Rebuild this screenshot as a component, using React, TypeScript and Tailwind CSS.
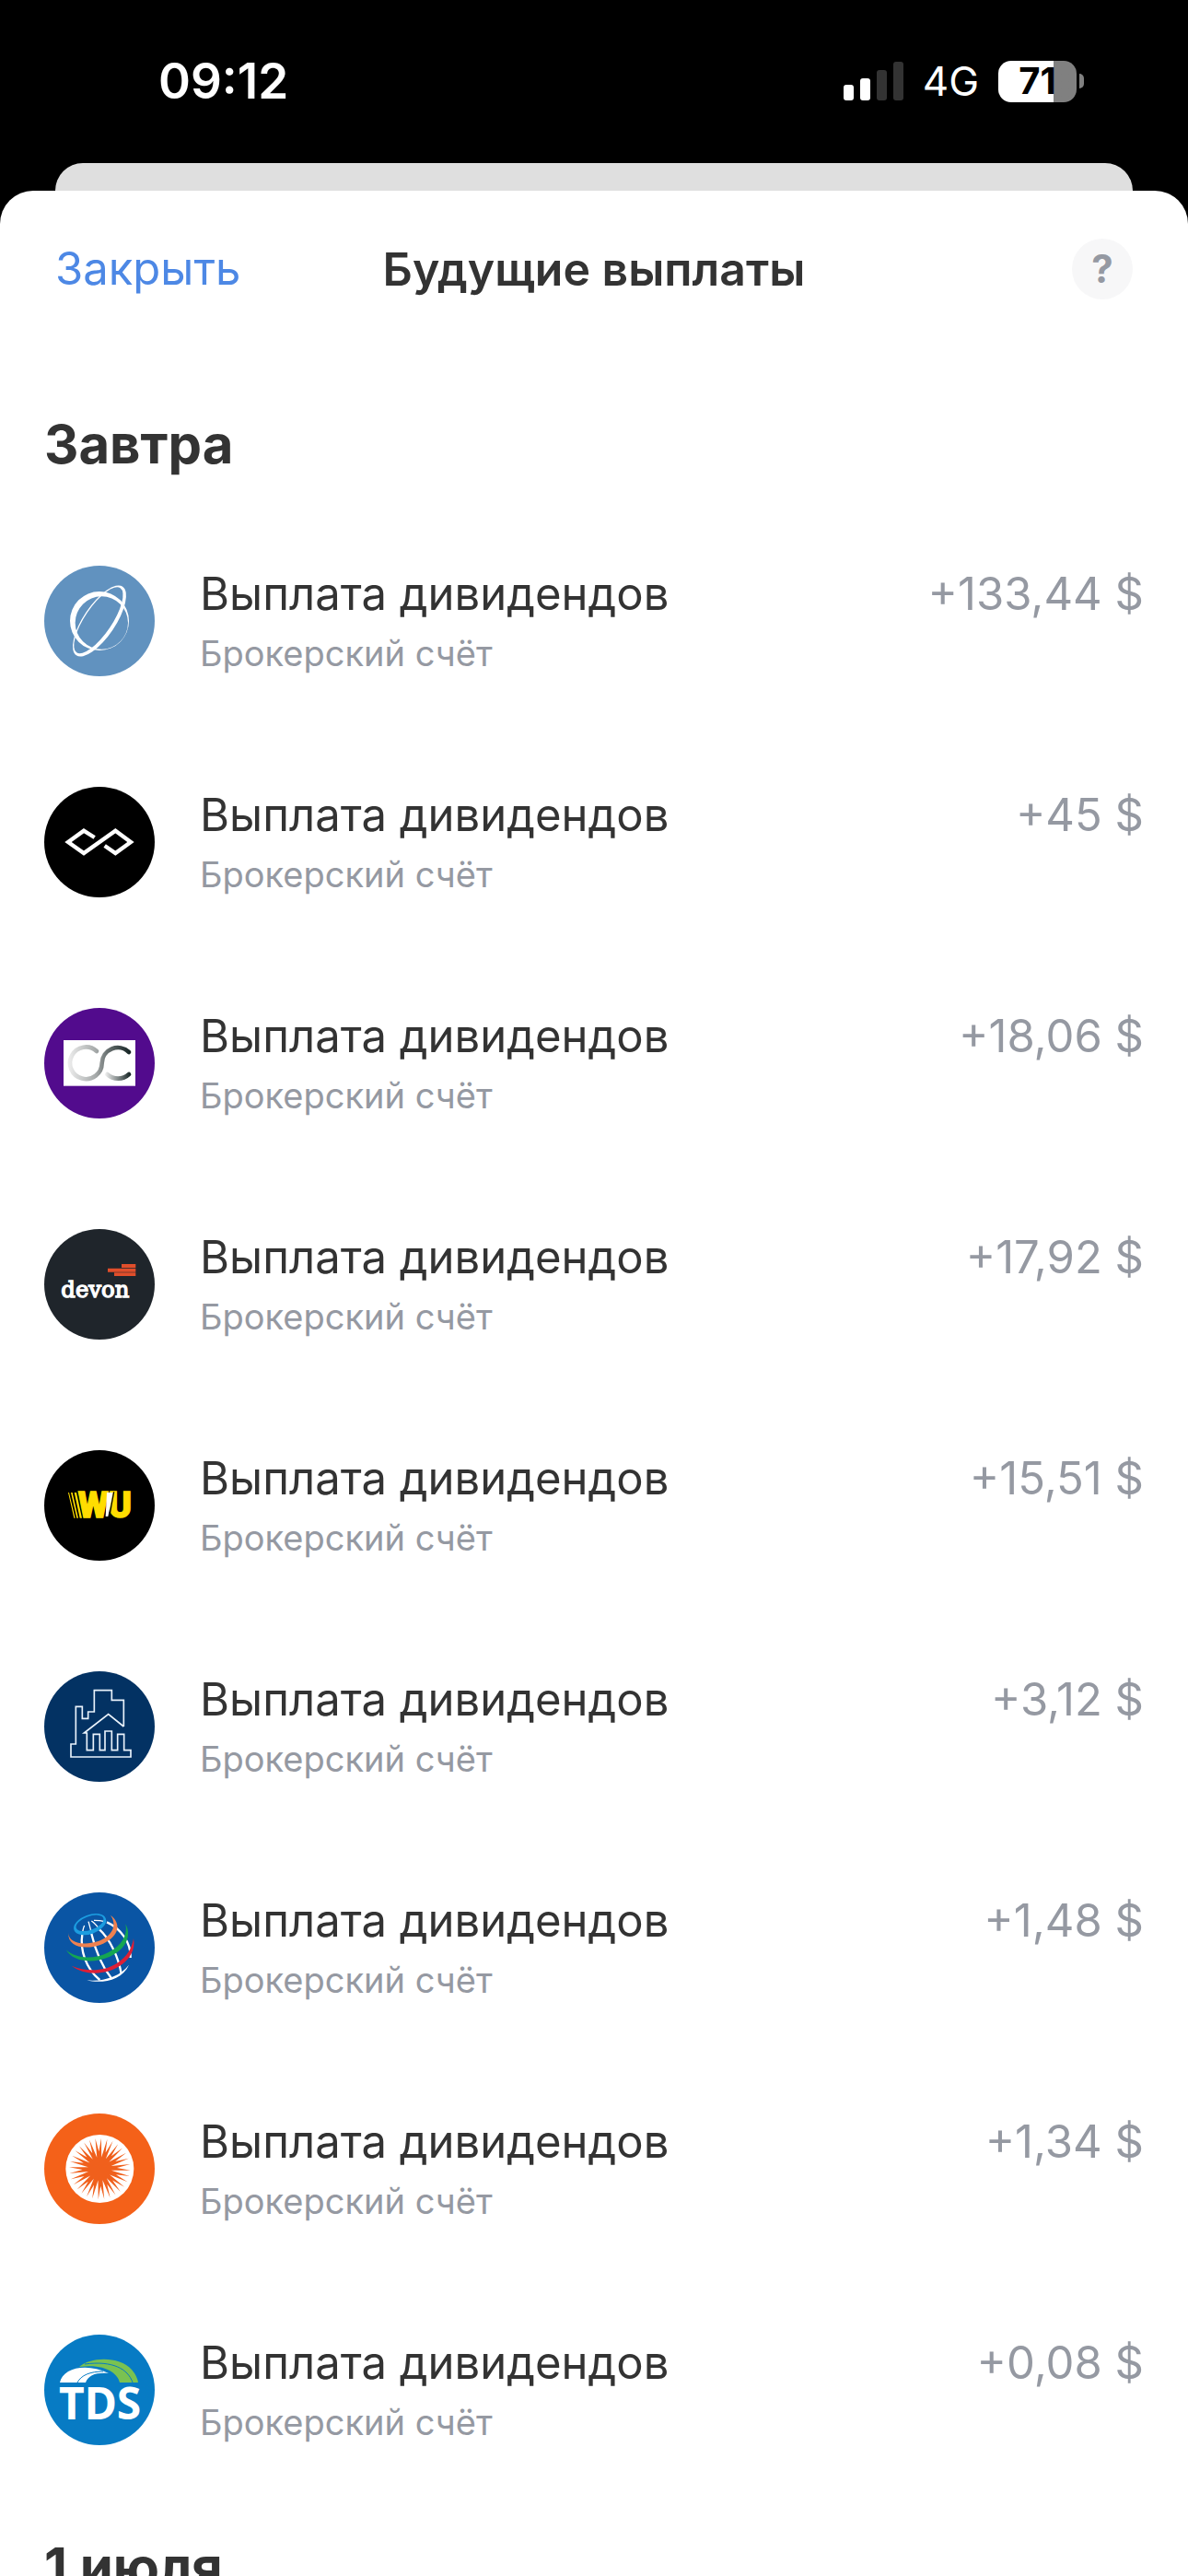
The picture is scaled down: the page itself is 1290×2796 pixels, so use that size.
import React, { ReactNode } from 'react';

interface LogoProps {
  className: string;
  viewBox?: string;
  children: ReactNode;
}

/**
 * Round company logo
 */
function Logo({ className, viewBox = '24 27 360 360', children }: LogoProps) {
  return (
    <svg viewBox={viewBox} aria-hidden="true" className={`size-[120px] shrink-0 rounded-full ${className}`}>
      {children}
    </svg>
  );
}

function OrbitLogo() {
  return (
    <Logo className="bg-[#6192bf]">
      <path
        fill="#fff"
        fillRule="evenodd"
        d="M108 207a96 96 0 1 0 192 0a96 96 0 1 0 -192 0zM125 213a86 86 0 1 0 172 0a86 86 0 1 0 -172 0z"
      />
      <path
        fill="#fff"
        fillRule="evenodd"
        transform="rotate(-56 204 207)"
        d="M69 207a135 52 0 1 0 270 0a135 52 0 1 0 -270 0zM77 203a127 44 0 1 0 254 0a127 44 0 1 0 -254 0z"
      />
    </Logo>
  );
}

function InfinityLogo() {
  return (
    <Logo className="bg-black">
      <path
        d="M188 192L153 170L102 207L153 243L256 170L306 207L256 243L221 219"
        fill="none"
        stroke="#fff"
        strokeWidth="13"
      />
    </Logo>
  );
}

function CurvesLogo() {
  return (
    <Logo className="bg-[#520b8d]">
      <defs>
        <linearGradient id="curve-main" gradientUnits="userSpaceOnUse" x1="104" y1="0" x2="306" y2="0">
          <stop offset="0" stopColor="#ececec" />
          <stop offset="0.45" stopColor="#a3a7a7" />
          <stop offset="0.6" stopColor="#6f7777" />
          <stop offset="1" stopColor="#132222" />
        </linearGradient>
        <linearGradient id="curve-tail" gradientUnits="userSpaceOnUse" x1="222" y1="0" x2="306" y2="0">
          <stop offset="0" stopColor="#f2f2f2" />
          <stop offset="1" stopColor="#132222" />
        </linearGradient>
      </defs>
      <rect x="87" y="132" width="234" height="149" fill="#fff" />
      <g fill="none" strokeWidth="14" strokeLinecap="round">
        <path stroke="url(#curve-main)" d="M195 168A52 52 0 1 0 212 207A52 52 0 0 1 300 171" />
        <path stroke="url(#curve-tail)" d="M229 243A52 52 0 0 0 300 243" />
      </g>
    </Logo>
  );
}

function DevonLogo() {
  return (
    <Logo className="bg-[#1f252b]">
      <path fill="#e04e2b" d="M276 141h46v12h-46zM231 155h91v12h-91zM252 169h70v11h-70z" />
      <text x="79" y="248" fill="#fff" stroke="#fff" strokeWidth="4" fontSize="73" fontFamily="DejaVu Serif, serif">
        devon
      </text>
    </Logo>
  );
}

function WuLogo() {
  return (
    <Logo className="bg-black">
      <path fill="#ffdd00" d="M102 165h3l20 83h-4zM111 165h5l19 83h-5zM122 165h7l18 83h-7z" />
      <g
        fill="#ffdd00"
        stroke="#ffdd00"
        strokeWidth="4"
        fontSize="114"
        fontWeight="900"
        fontFamily="Roboto, sans-serif"
      >
        <text x="134" y="247">W</text>
        <text x="233" y="247">U</text>
      </g>
      <path fill="#fff" d="M228 165h20l-16 78h-8z" />
      <path fill="#000" d="M249 163h4l-16 86h-4z" />
    </Logo>
  );
}

function BuildingLogo() {
  return (
    <Logo className="bg-[#033263]">
      <path
        d="M283 207V121H244V89H187V159H167V181H148V142H127V264H111V306H306V284H284V232H263V284H244V222H222V284H205V232H184V284H163V228H154L233 167L283 207"
        fill="none"
        stroke="#e9f2fb"
        strokeWidth="5"
      />
    </Logo>
  );
}

function GlobeLogo() {
  return (
    <Logo className="bg-[#0a55a4]">
      <g fill="none" stroke="#fff" strokeWidth="7">
        <path strokeWidth="4" d="M155 135Q150 145 148 165M168 122Q172 135 178 160M178 120Q190 128 205 148M186 118Q205 118 222 122" />
        <path d="M148 163C140 215 160 275 205 312" />
        <path d="M177 158C188 205 208 262 243 307" />
        <path d="M202 146C240 180 266 240 275 291" />
        <path d="M228 124C270 142 308 190 305 240" />
      </g>
      <path fill="#fff" d="M163 313C215 318 270 302 300 263C278 315 208 325 163 313z" />
      <path
        fill="#1c9de0"
        fillRule="evenodd"
        transform="rotate(-20 173 131)"
        d="M118 131a55 31 0 1 0 110 0a55 31 0 1 0 -110 0zM127 127a47 22 0 1 0 94 0a47 22 0 1 0 -94 0z"
      />
      <path fill="#ee8150" d="M103 159C103 192 152 202 200 186C244 170 264 136 240 101C276 128 269 168 216 194C162 217 99 207 103 159z" />
      <path fill="#15a651" d="M95 214C126 243 185 247 234 222C277 200 297 166 289 130C310 168 291 212 238 236C182 260 118 254 95 214z" />
      <path fill="#dd1f36" d="M113 266C163 287 220 284 262 257C293 236 309 212 315 177C322 214 303 246 268 268C220 298 153 297 113 266z" />
    </Logo>
  );
}

const SUN_RAYS = 32;

// Star outline: long points on the outer ring, notches on the inner one
const sunPoints = Array.from({ length: SUN_RAYS * 2 }, (_, i) => {
  const angle = (Math.PI * (i + 0.5)) / SUN_RAYS;
  const radius = i % 2 === 0 ? 100 : i % 4 === 1 ? 38 : 56;
  return `${(205 + radius * Math.cos(angle)).toFixed(1)},${(207 + radius * Math.sin(angle)).toFixed(1)}`;
}).join(' ');

function SunLogo() {
  return (
    <Logo className="bg-[#f46119]">
      <circle cx="205" cy="207" r="111" fill="#fff" />
      <polygon points={sunPoints} fill="#f0601c" />
    </Logo>
  );
}

function TdsLogo() {
  return (
    <Logo className="bg-[#077bc4]" viewBox="0 0 120 120">
      <path fill="#7ac251" d="M38 35C50 24 82 23 95 38Q101 45 102 52H82C80 42 66 31 38 35z" />
      <path fill="none" stroke="#077bc4" strokeWidth="1" d="M44 32C74 28 91 37 96 52" />
      <path fill="#fff" d="M17 52C20 36 46 30 70 42C56 41 48 44 45 52z" />
      <path fill="none" stroke="#077bc4" strokeWidth="1" d="M36 52C40 44 50 40 64 40" />
      <text x="16" y="92" fill="#fff" fontSize="48" fontWeight="700" fontFamily="Noto Sans, sans-serif">
        TDS
      </text>
    </Logo>
  );
}

interface Payment {
  logo: ReactNode;
  amount: string;
}

const payments: Payment[] = [
  { logo: <OrbitLogo />, amount: '+133,44 $' },
  { logo: <InfinityLogo />, amount: '+45 $' },
  { logo: <CurvesLogo />, amount: '+18,06 $' },
  { logo: <DevonLogo />, amount: '+17,92 $' },
  { logo: <WuLogo />, amount: '+15,51 $' },
  { logo: <BuildingLogo />, amount: '+3,12 $' },
  { logo: <GlobeLogo />, amount: '+1,48 $' },
  { logo: <SunLogo />, amount: '+1,34 $' },
  { logo: <TdsLogo />, amount: '+0,08 $' },
];

function StatusBar() {
  return (
    <div className="flex h-[177px] items-start justify-between pt-14 pr-[113px] pl-[172px] text-white">
      <span className="text-[53px] leading-[64px] font-semibold">09:12</span>
      <div className="flex h-[64px] items-center gap-[21px]">
        <svg viewBox="0 0 65 42" aria-hidden="true" className="h-[42px] w-[65px]">
          <rect x="0" y="25" width="11" height="17" rx="3" fill="#fff" />
          <rect x="18" y="18" width="11" height="24" rx="3" fill="#fff" />
          <rect x="36" y="9" width="11" height="33" rx="3" fill="#333" />
          <rect x="54" y="0" width="11" height="42" rx="3" fill="#333" />
        </svg>
        <span className="text-[44px] leading-[64px]">4G</span>
        <div className="flex items-center gap-[3px]">
          <div className="flex h-[45px] w-[85px] items-center justify-center rounded-[14px] bg-linear-to-r from-white from-71% to-[#808080] to-71% text-[40px] leading-none font-bold text-black">
            71
          </div>
          <div className="h-4 w-[5px] rounded-r-full bg-[#808080]" />
        </div>
      </div>
    </div>
  );
}

function PaymentRow({ logo, amount }: Payment) {
  return (
    <li className="flex items-start gap-[49px] py-[60px]">
      {logo}
      <div className="flex grow flex-col gap-2.5">
        <p className="text-[49px] leading-[62px] text-[#333333]">Выплата дивидендов</p>
        <p className="text-[38px] leading-[46px] text-[#9599a2]">Брокерский счёт</p>
      </div>
      <p className="text-[49px] leading-[62px] text-[#9599a2]">{amount}</p>
    </li>
  );
}

function SectionTitle({ children }: { children: ReactNode }) {
  return <h2 className="py-9 text-[58px] leading-[72px] font-bold text-[#333333]">{children}</h2>;
}

export default function App() {
  return (
    <div className="h-screen overflow-hidden bg-black font-['Inter','Liberation_Sans',sans-serif]">
      <StatusBar />
      <div className="mx-[60px] h-[30px] rounded-t-[30px] bg-[#dfdfdf]" />
      <main className="min-h-screen rounded-t-[36px] bg-white">
        <header className="grid h-[170px] grid-cols-[1fr_auto_1fr] items-center px-[60px]">
          <button type="button" className="justify-self-start text-[49px] leading-[62px] text-[#4d88e5]">
            Закрыть
          </button>
          <h1 className="text-[50px] leading-[62px] font-semibold text-[#333333]">Будущие выплаты</h1>
          <button
            type="button"
            aria-label="Справка"
            className="flex size-[66px] items-center justify-center justify-self-end rounded-full bg-[#f7f7f8] text-[42px] leading-none font-bold text-[#9599a2]"
          >
            ?
          </button>
        </header>
        <div className="px-12 pt-[33px]">
          <section>
            <SectionTitle>Завтра</SectionTitle>
            <ul>
              {payments.map((payment) => (
                <PaymentRow key={payment.amount} {...payment} />
              ))}
            </ul>
          </section>
          <section>
            <SectionTitle>1 июля</SectionTitle>
          </section>
        </div>
      </main>
    </div>
  );
}
